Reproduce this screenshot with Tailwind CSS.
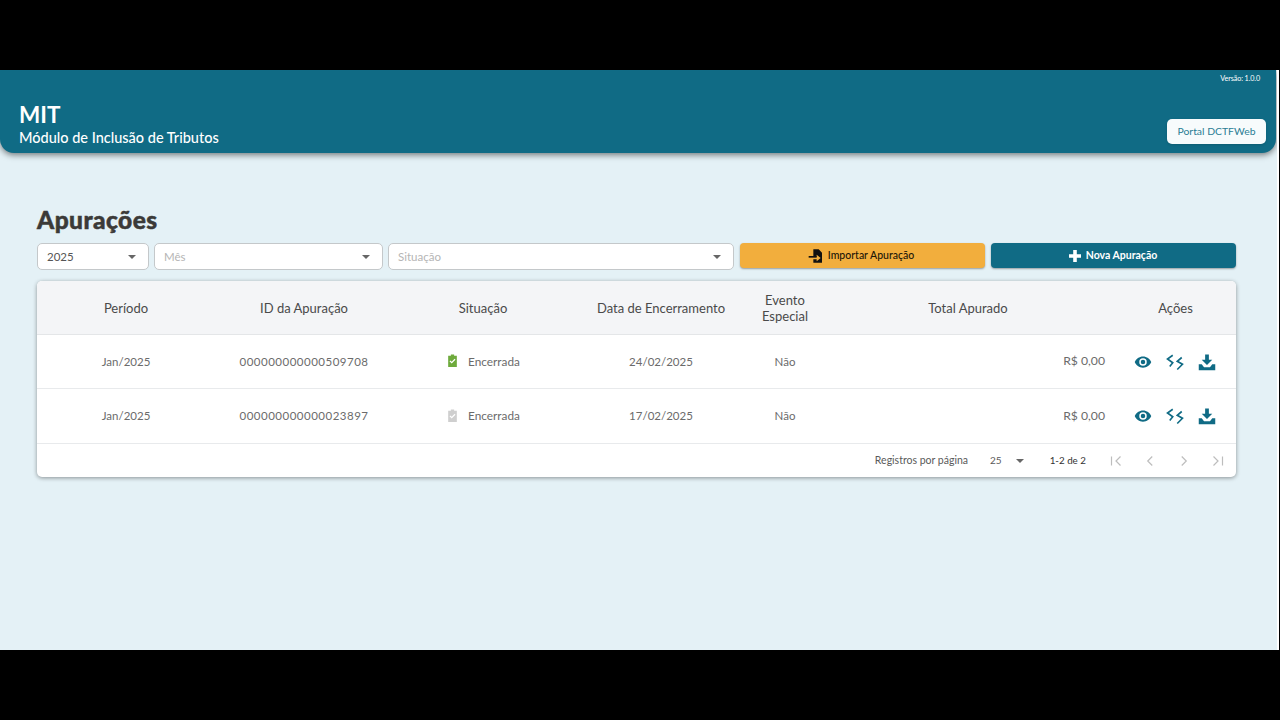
<!DOCTYPE html>
<html lang="pt-BR">
<head>
<meta charset="utf-8">
<script src="https://cdn.jsdelivr.net/npm/@tailwindcss/browser@4"></script>
</head>
<body class="bg-black h-[720px] w-[1280px] overflow-hidden font-['Lato','Open_Sans',sans-serif]">
<div class="h-[70px]"></div>
<main class="h-[580px] w-[1279px] bg-white">
  <div class="h-full w-[1277px] bg-[#e4f1f6] overflow-hidden">
    <header class="h-[83px] w-[1276px] bg-[#106b85] rounded-b-[14px] shadow-[0_2px_6px_rgba(0,0,0,0.5)] text-white">
      <div class="flex justify-end pr-[16px] pt-[3px] text-[7.2px] leading-[11px] tracking-[-0.1px]">Versão: 1.0.0</div>
      <div class="flex items-end justify-between pl-[19px] pr-[10px] pt-[17px]">
        <div>
          <div class="text-[22.5px] leading-[28px] font-bold">MIT</div>
          <div class="text-[14.5px] leading-[18px] font-medium">Módulo de Inclusão de Tributos</div>
        </div>
        <button class="h-[25px] w-[99px] mb-[3px] rounded-[5px] bg-[#f7fbfc] text-[#2a7d94] text-[10.4px] shadow-sm">Portal DCTFWeb</button>
      </div>
    </header>

    <section class="pl-[37px] pr-[41px] pt-[52px]">
      <h1 class="text-[24.5px] leading-[29px] font-black tracking-[0.45px] [-webkit-text-stroke:0.5px_#3b3a38] text-[#3b3a38]">Apurações</h1>
      <div class="flex gap-[5px] mt-[9px] h-[27px]">
        <div class="w-[112px] flex items-center justify-between pl-[9px] pr-[12px] bg-white rounded-[5px] border border-[#c4c8ca] text-[11.5px] text-[#555]">
          <span>2025</span>
          <span class="w-0 h-0 border-x-[4px] border-x-transparent border-t-[4px] border-t-[#666]"></span>
        </div>
        <div class="w-[229px] flex items-center justify-between pl-[9px] pr-[12px] bg-white rounded-[5px] border border-[#c4c8ca] text-[11.5px] text-[#b5b5b5]">
          <span>Mês</span>
          <span class="w-0 h-0 border-x-[4px] border-x-transparent border-t-[4px] border-t-[#666]"></span>
        </div>
        <div class="w-[346px] flex items-center justify-between pl-[9px] pr-[12px] bg-white rounded-[5px] border border-[#c4c8ca] text-[11.5px] text-[#b5b5b5]">
          <span>Situação</span>
          <span class="w-0 h-0 border-x-[4px] border-x-transparent border-t-[4px] border-t-[#666]"></span>
        </div>
        <button class="w-[245px] h-[25px] ml-[1px] pr-[3px] flex items-center justify-center gap-[4px] bg-[#f2ae3d] rounded-[4px] shadow-[0_1px_2px_rgba(0,0,0,0.35)] text-[10.5px] font-medium text-[#1c1608]">
          <svg viewBox="0 0 24 24" class="w-[16px] h-[16px]" fill="#111"><path d="M8 2h8l5 5v15H8v-5h5v3l6-5-6-5v3H8z"/><path d="M1 12h12v2.500H1z"/></svg>
          Importar Apuração
        </button>
        <button class="w-[245px] h-[25px] ml-[1px] pr-[1px] flex items-center justify-center gap-[5px] bg-[#106b85] rounded-[4px] shadow-[0_1px_2px_rgba(0,0,0,0.35)] text-[10.5px] font-bold text-white">
          <svg viewBox="0 0 12 12" class="w-[12px] h-[12px]" fill="#fff"><path d="M4.2 0h3.6v4.2H12v3.6H7.8V12H4.2V7.8H0V4.2h4.2z"/></svg>
          Nova Apuração
        </button>
      </div>

      <div class="mt-[11px] bg-white rounded-[5px] shadow-[0_1px_4px_rgba(0,0,0,0.4)] overflow-hidden text-[11.5px] text-[#6b6b6b]">
        <div class="grid grid-cols-[178px_178px_180px_176px_72px_294px_121px] h-[54px] pt-[2px] items-center text-center bg-[#f4f5f7] border-b border-[#e4e6e8] text-[13px] text-[#4a4a4a]">
          <div>Período</div>
          <div>ID da Apuração</div>
          <div>Situação</div>
          <div>Data de Encerramento</div>
          <div class="leading-[16px] -translate-y-px">Evento<br>Especial</div>
          <div>Total Apurado</div>
          <div>Ações</div>
        </div>

        <div class="grid grid-cols-[178px_178px_180px_176px_72px_294px_121px] h-[54px] items-center text-center border-b border-[#e8eaec]">
          <div>Jan/2025</div>
          <div class="tracking-[0.5px]">000000000000509708</div>
          <div class="flex items-center justify-center gap-[9px]">
            <svg viewBox="0 0 24 24" class="w-[13px] h-[13px] -translate-y-px" fill="#6eaa3c"><path fill-rule="evenodd" d="M9 1h6v2h5v21H4V3h5zM10.5 17.5l7-7-1.6-1.6-5.4 5.4-2.4-2.4-1.6 1.6z"/></svg>
            <span class="text-[11.8px]">Encerrada</span>
          </div>
          <div>24/02/2025</div>
          <div>Não</div>
          <div class="text-right text-[12.2px] pr-[10px]">R$ 0,00</div>
          <div class="flex items-center justify-between pl-[19px] pr-[20px]">
            <svg viewBox="0 0 24 24" class="w-[18px] h-[18px]" fill="#106b85"><path fill-rule="evenodd" d="M12 4.5C7 4.5 2.7 7.6 1 12c1.700 4.400 6 7.500 11 7.500s9.300-3.100 11-7.500c-1.700-4.400-6-7.500-11-7.500zM12 17a5 5 0 1 1 0-10 5 5 0 0 1 0 10zm0-8a3 3 0 1 0 0 6 3 3 0 0 0 0-6z"/></svg>
            <svg viewBox="0 0 24 24" class="w-[18px] h-[18px]" fill="none" stroke="#106b85" stroke-width="2.200"><path d="M9 3L2 8l7 5-4 5"/><path d="M21 6l-6 5 7 4-7 7"/></svg>
            <svg viewBox="0 0 24 24" class="w-[18px] h-[18px]" fill="#106b85"><path d="M9.500 2h5v7H19l-7 7-7-7h4.500z"/><path d="M1 15h4l3 4h8l3-4h4v8H1z"/></svg>
          </div>
        </div>

        <div class="grid grid-cols-[178px_178px_180px_176px_72px_294px_121px] h-[55px] items-center text-center border-b border-[#e8eaec]">
          <div>Jan/2025</div>
          <div class="tracking-[0.5px]">000000000000023897</div>
          <div class="flex items-center justify-center gap-[9px]">
            <svg viewBox="0 0 24 24" class="w-[13px] h-[13px] -translate-y-px" fill="#cfcfcf"><path fill-rule="evenodd" d="M9 1h6v2h5v21H4V3h5zM10.5 17.5l7-7-1.6-1.6-5.4 5.4-2.4-2.4-1.6 1.6z"/></svg>
            <span class="text-[11.8px]">Encerrada</span>
          </div>
          <div>17/02/2025</div>
          <div>Não</div>
          <div class="text-right text-[12.2px] pr-[10px]">R$ 0,00</div>
          <div class="flex items-center justify-between pl-[19px] pr-[20px]">
            <svg viewBox="0 0 24 24" class="w-[18px] h-[18px]" fill="#106b85"><path fill-rule="evenodd" d="M12 4.5C7 4.5 2.7 7.6 1 12c1.700 4.400 6 7.500 11 7.500s9.300-3.100 11-7.500c-1.700-4.400-6-7.500-11-7.500zM12 17a5 5 0 1 1 0-10 5 5 0 0 1 0 10zm0-8a3 3 0 1 0 0 6 3 3 0 0 0 0-6z"/></svg>
            <svg viewBox="0 0 24 24" class="w-[18px] h-[18px]" fill="none" stroke="#106b85" stroke-width="2.200"><path d="M9 3L2 8l7 5-4 5"/><path d="M21 6l-6 5 7 4-7 7"/></svg>
            <svg viewBox="0 0 24 24" class="w-[18px] h-[18px]" fill="#106b85"><path d="M9.500 2h5v7H19l-7 7-7-7h4.500z"/><path d="M1 15h4l3 4h8l3-4h4v8H1z"/></svg>
          </div>
        </div>

        <div class="h-[33px] flex items-center justify-end pr-[9px] text-[10.5px] text-[#5a5a5a]">
          <span>Registros por página</span>
          <span class="ml-[22px] text-[10px]">25</span>
          <span class="ml-[14px] w-0 h-0 border-x-[4px] border-x-transparent border-t-[4px] border-t-[#666]"></span>
          <span class="ml-[26px] text-[9.8px] text-[#333]">1-2 de 2</span>
          <div class="ml-[21px] flex items-center gap-[16px]">
            <svg viewBox="0 0 24 24" class="w-[18px] h-[18px]" fill="none" stroke="#bdbdbd" stroke-width="1.600"><path d="M6 6v12M18 6l-6 6 6 6"/></svg>
            <svg viewBox="0 0 24 24" class="w-[18px] h-[18px]" fill="none" stroke="#bdbdbd" stroke-width="1.600"><path d="M15 6l-6 6 6 6"/></svg>
            <svg viewBox="0 0 24 24" class="w-[18px] h-[18px]" fill="none" stroke="#bdbdbd" stroke-width="1.600"><path d="M9 6l6 6-6 6"/></svg>
            <svg viewBox="0 0 24 24" class="w-[18px] h-[18px]" fill="none" stroke="#bdbdbd" stroke-width="1.600"><path d="M6 6l6 6-6 6M18 6v12"/></svg>
          </div>
        </div>
      </div>
    </section>
  </div>
</main>
</body>
</html>
